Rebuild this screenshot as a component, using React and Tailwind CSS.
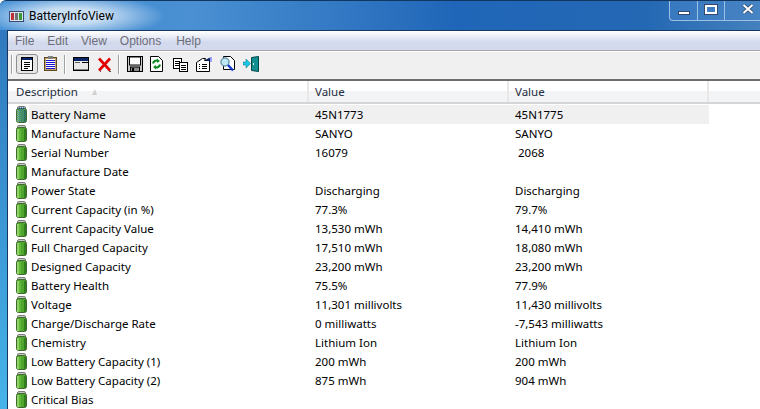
import React from 'react'

const rows = [
    ['Battery Name', '45N1773', '45N1775'],
    ['Manufacture Name', 'SANYO', 'SANYO'],
    ['Serial Number', '16079', '\u00a02068'],
    ['Manufacture Date', '', ''],
    ['Power State', 'Discharging', 'Discharging'],
    ['Current Capacity (in %)', '77.3%', '79.7%'],
    ['Current Capacity Value', '13,530 mWh', '14,410 mWh'],
    ['Full Charged Capacity', '17,510 mWh', '18,080 mWh'],
    ['Designed Capacity', '23,200 mWh', '23,200 mWh'],
    ['Battery Health', '75.5%', '77.9%'],
    ['Voltage', '11,301 millivolts', '11,430 millivolts'],
    ['Charge/Discharge Rate', '0 milliwatts', '-7,543 milliwatts'],
    ['Chemistry', 'Lithium Ion', 'Lithium Ion'],
    ['Low Battery Capacity (1)', '200 mWh', '200 mWh'],
    ['Low Battery Capacity (2)', '875 mWh', '904 mWh'],
    ['Critical Bias', '', ''],
]

function Battery({ selected }) {
    return (
        <svg width="11" height="17" viewBox="0 0 11 17" className="shrink-0">
            <defs>
                <pattern id="dither" width="2" height="2" patternUnits="userSpaceOnUse">
                    <rect width="1" height="1" fill="#2f62c8" />
                    <rect x="1" y="1" width="1" height="1" fill="#2f62c8" />
                </pattern>
            </defs>
            <rect x="1.5" y="0.5" width="8" height="4" rx="1.5" fill="#c4c8c4" stroke="#7a7e7a" />
            <rect x="0.5" y="2.5" width="10" height="14" rx="2" fill="#4fa52e" stroke="#41692f" />
            <rect x="1" y="4" width="2" height="12" fill="#8fd565" />
            <rect x="3" y="4" width="2" height="12" fill="#62b83a" />
            <rect x="8" y="4" width="2" height="12" fill="#2f7f1e" />
            {selected && <rect x="1" y="4" width="9" height="12" fill="url(#dither)" opacity="0.75" />}
            {selected && <rect x="2" y="1" width="7" height="3" fill="url(#dither)" opacity="0.75" />}
        </svg>
    )
}

function Sep() {
    return <div className="w-[2px] h-[19px] bg-[#a0a0a0] border-r border-white shrink-0" />
}

function ViewIcon() {
    return (
        <svg width="12" height="14" viewBox="0 0 12 14">
            <rect x="0.5" y="0.5" width="11" height="13" fill="#fff" stroke="#000" />
            <rect x="1" y="1" width="10" height="2" fill="#0a246a" />
            <path d="M3 5.5h6M3 7.5h6M3 9.5h6M3 11.5h4" stroke="#000" />
        </svg>
    )
}

function ClipIcon() {
    return (
        <svg width="13" height="15" viewBox="0 0 13 15">
            <rect x="0.5" y="1.5" width="12" height="13" fill="#c8a468" stroke="#5c4a20" />
            <rect x="2" y="3" width="9" height="10" fill="#fff" />
            <path d="M2 4.5h9M2 6.5h9M2 8.5h9M2 10.5h9M2 12.5h9" stroke="#1414d0" />
            <rect x="4" y="0" width="5" height="3" fill="#808080" />
        </svg>
    )
}

function WindowIcon() {
    return (
        <svg width="16" height="14" viewBox="0 0 16 14">
            <rect x="0.5" y="0.5" width="15" height="13" fill="#e8e8e8" stroke="#000" />
            <rect x="1" y="1" width="14" height="3" fill="#0a246a" />
            <rect x="2" y="5" width="5" height="1" fill="#606060" />
            <rect x="9" y="5" width="6" height="1" fill="#000" />
            <rect x="1" y="12" width="14" height="1" fill="#808080" />
        </svg>
    )
}

function CrossIcon() {
    return (
        <svg width="15" height="15" viewBox="0 0 15 15">
            <path d="M2 1.5l11 12" stroke="#e00000" strokeWidth="2.6" />
            <path d="M13 1.5l-11 12" stroke="#e00000" strokeWidth="2.6" />
            <path d="M3 14.5h1M12 14.5h2" stroke="#555" />
        </svg>
    )
}

function SaveIcon() {
    return (
        <svg width="16" height="16" viewBox="0 0 16 16">
            <rect x="0.5" y="0.5" width="15" height="15" fill="#c8c8c8" stroke="#000" />
            <rect x="2.5" y="1" width="11" height="8" fill="#fff" stroke="#000" />
            <rect x="3.5" y="11" width="9" height="4.5" fill="#888" stroke="#000" />
            <rect x="5" y="12" width="2" height="3" fill="#000" />
        </svg>
    )
}

function RefreshIcon() {
    return (
        <svg width="13" height="16" viewBox="0 0 13 16">
            <path d="M0.5 0.5h8l4 4v11h-12z" fill="#fff" stroke="#000" />
            <path d="M3 7.5a3.5 3.5 0 0 1 5-2.5" fill="none" stroke="#0a8a20" strokeWidth="2" />
            <path d="M10 8.5a3.5 3.5 0 0 1-5 2.5" fill="none" stroke="#0a8a20" strokeWidth="2" />
            <path d="M7 2.5l3 2.5-3 2zM6 9l-3 2 3 2.5z" fill="#0a8a20" />
        </svg>
    )
}

function CopyIcon() {
    return (
        <svg width="15" height="14" viewBox="0 0 15 14">
            <rect x="0.5" y="0.5" width="8" height="10" fill="#fff" stroke="#000" />
            <path d="M2 3.5h5M2 5.5h5M2 7.5h5" stroke="#000" />
            <rect x="6.5" y="4.5" width="8" height="9" fill="#fff" stroke="#000" />
            <path d="M8 7.5h5M8 9.5h5M8 11.5h5" stroke="#000" />
        </svg>
    )
}

function PropsIcon() {
    return (
        <svg width="16" height="15" viewBox="0 0 16 15">
            <path d="M0.5 5.5l6-4h3l-1 2h5v11h-13z" fill="#fff" stroke="#000" />
            <path d="M3 7.5h1M6 7.5h5M3 9.5h1M6 9.5h5M3 11.5h1M6 11.5h5" stroke="#000" />
            <path d="M9 3l5-2.5v4z" fill="#0a246a" />
            <rect x="14" y="0" width="2" height="5" fill="#a0a0ff" />
        </svg>
    )
}

function FindIcon() {
    return (
        <svg width="15" height="16" viewBox="0 0 15 16">
            <path d="M3.5 0.5h7l4 4v9h-11z" fill="#fff" stroke="#000" />
            <circle cx="5" cy="6" r="4" fill="#bfe8f4" stroke="#6a9ab0" strokeWidth="1.5" />
            <path d="M8 9l5 5.5" stroke="#1a3fd0" strokeWidth="2.5" />
        </svg>
    )
}

function ExitIcon() {
    return (
        <svg width="16" height="16" viewBox="0 0 16 16">
            <path d="M8.5 1.5l7-1v15l-7-1z" fill="#0f8f8f" stroke="#004848" />
            <rect x="10" y="7" width="1" height="2" fill="#e8e8e8" />
            <path d="M0 6h3V3l4.5 4.5L3 12V9H0z" fill="#18c8e8" stroke="#086878" strokeWidth="0.5" />
        </svg>
    )
}

export default function App() {
    return (
        <div className="w-[760px] h-[409px] overflow-hidden flex flex-col bg-gradient-to-b from-[#2f74bc] to-[#46b4ea] border-t border-[#12365f] rounded-tl-[6px] font-['Noto_Sans',sans-serif]">
            <div className="h-[29px] flex items-start shrink-0 bg-[radial-gradient(ellipse_95px_22px_at_70px_15px,#c8def3_35%,transparent),linear-gradient(to_right,#3a8ad4,#4a90d2_25%,#2066b8_60%,#2468b4_85%,#4480bc)]">
                <div className="flex items-center gap-[5px] pl-[9px] pt-[9px] flex-1">
                    <svg width="15" height="11" viewBox="0 0 15 11" className="shrink-0">
                        <rect x="0.5" y="0.5" width="14" height="10" fill="#d8e4f4" stroke="#3a4a70" />
                        <rect x="2" y="2" width="3" height="7" fill="#c03030" />
                        <rect x="6" y="2" width="3" height="7" fill="#707070" />
                        <rect x="10" y="2" width="3" height="7" fill="#3a9a30" />
                    </svg>
                    <span className="text-[12px] text-black font-['Roboto',sans-serif] leading-none">BatteryInfoView</span>
                </div>
                <div className="flex h-[20px] w-[91px] shrink-0 border-l border-b border-[#9cc0e4] rounded-bl-[4px] bg-[#4a8ad0]/40">
                    <div className="w-[28px] border-r border-[#9cc0e4] flex items-center justify-center">
                        <div className="w-[12px] h-[4px] mt-[5px] bg-white border border-[#33486a]" />
                    </div>
                    <div className="w-[27px] border-r border-[#9cc0e4] flex items-center justify-center">
                        <div className="w-[12px] h-[9px] border-[2px] border-white outline outline-1 outline-[#33486a] mb-[2px]" />
                    </div>
                    <div className="flex-1 flex items-center justify-center pb-[3px] pl-[10px]">
                        <svg width="12" height="10" viewBox="0 0 12 10">
                            <path d="M1.5 1l9 8M10.5 1l-9 8" stroke="#33486a" strokeWidth="3.4" />
                            <path d="M1.5 1l9 8M10.5 1l-9 8" stroke="#fff" strokeWidth="2" />
                        </svg>
                    </div>
                </div>
            </div>

            <div className="flex-1 ml-[7px] flex flex-col bg-white border-l border-t border-[#16385f] min-h-0">
                <div className="h-[20px] shrink-0 flex items-center gap-[13px] pl-[7px] bg-gradient-to-b from-white to-[#d3daee] to-60% text-[12px] text-[#6e6e78] border-b border-[#a8a8a8] font-['Liberation_Sans',sans-serif]">
                    <span>File</span>
                    <span>Edit</span>
                    <span>View</span>
                    <span>Options</span>
                    <span className="ml-[2px]">Help</span>
                </div>
                <div className="h-[30px] shrink-0 flex items-start pl-[3px] bg-[#f0f0f0] border-t border-white border-b-2 border-b-[#6d6d6d]">
                    <div className="mt-[3px]"><Sep /></div>
                    <div className="mt-[2px] ml-[3px] w-[22px] h-[20px] flex items-center justify-center border border-[#8e8e8e] rounded-[3px] bg-[#e6e6e6]">
                        <ViewIcon />
                    </div>
                    <div className="mt-[4px] ml-[6px]"><ClipIcon /></div>
                    <div className="mt-[3px] ml-[7px]"><Sep /></div>
                    <div className="mt-[5px] ml-[7px]"><WindowIcon /></div>
                    <div className="mt-[5px] ml-[8px]"><CrossIcon /></div>
                    <div className="mt-[3px] ml-[6px]"><Sep /></div>
                    <div className="mt-[4px] ml-[7px]"><SaveIcon /></div>
                    <div className="mt-[4px] ml-[7px]"><RefreshIcon /></div>
                    <div className="mt-[6px] ml-[10px]"><CopyIcon /></div>
                    <div className="mt-[5px] ml-[8px]"><PropsIcon /></div>
                    <div className="mt-[4px] ml-[8px]"><FindIcon /></div>
                    <div className="mt-[4px] ml-[8px]"><ExitIcon /></div>
                </div>
                <div className="h-[23px] shrink-0 flex text-[11.5px] text-[#1f2d3d] border-b-2 border-[#d5d5d5] bg-gradient-to-b from-white from-50% to-[#f3f4f6] to-50%">
                    <div className="w-[301px] pl-[8px] flex items-center gap-[13px] border-r-2 border-[#e8e8e8]">
                        <span>Description</span>
                        <svg width="8" height="8" viewBox="0 0 8 8"><path d="M1 7l3-6 1 3 1 3z" fill="#d0d0d0" /></svg>
                    </div>
                    <div className="w-[200px] pl-[6px] flex items-center border-r-2 border-[#e8e8e8]">Value</div>
                    <div className="w-[200px] pl-[6px] flex items-center border-r-2 border-[#e8e8e8]">Value</div>
                </div>
                <div className="flex-1 text-[11.5px] text-black pt-[1px]">
                    {rows.map((row, i) => (
                        <div key={row[0]} className={`h-[19px] flex items-center w-[701px] ${i === 0 ? 'bg-[#f0f0f0]' : ''}`}>
                            <div className="w-[301px] flex items-center">
                                <div className="w-[21px] pl-[8px] h-[19px] flex items-center bg-white">
                                    <Battery selected={i === 0} />
                                </div>
                                <span className="pl-[2px]">{row[0]}</span>
                            </div>
                            <div className="w-[200px] pl-[6px]">{row[1]}</div>
                            <div className="w-[200px] pl-[6px]">{row[2]}</div>
                        </div>
                    ))}
                </div>
            </div>
        </div>
    )
}
